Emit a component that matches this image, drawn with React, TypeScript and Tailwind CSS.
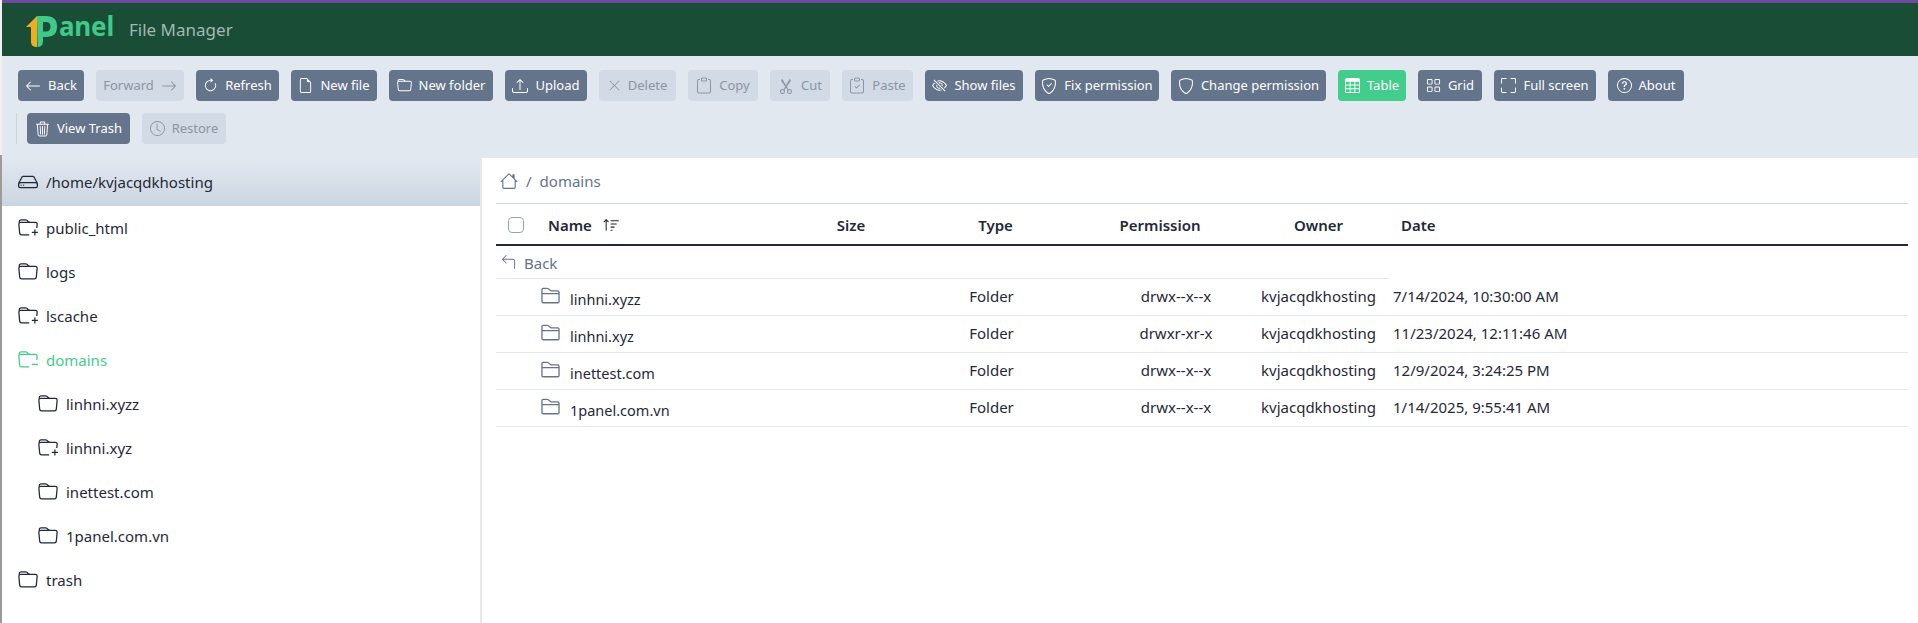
import type { ReactNode } from "react";
import {
  BsArrow90DegLeft, BsArrowClockwise, BsArrowLeft, BsArrowRight, BsClipboard, BsClipboardCheck,
  BsClock, BsEyeSlash, BsFileEarmark, BsFolder, BsFolder2, BsFolderMinus, BsFolderPlus, BsFullscreen,
  BsGrid, BsHdd, BsHouse, BsQuestionCircle, BsScissors, BsShield, BsShieldCheck, BsSortUp, BsTable,
  BsTrash3, BsUpload, BsXLg,
} from "react-icons/bs";

type Tool = { label: string; icon: ReactNode; width: string; tone?: "off" | "on"; iconRight?: boolean };

const ROW_ONE: Tool[] = [
  { label: "Back", icon: <BsArrowLeft className="w-4 h-4" />, width: "w-[66px]" },
  { label: "Forward", icon: <BsArrowRight className="w-4 h-4" />, width: "w-[88px]", tone: "off", iconRight: true },
  { label: "Refresh", icon: <BsArrowClockwise className="w-[15px] h-[15px]" />, width: "w-[83px]" },
  { label: "New file", icon: <BsFileEarmark className="w-[15px] h-[17px]" />, width: "w-[86px]" },
  { label: "New folder", icon: <BsFolder className="w-[15px] h-[15px]" />, width: "w-[104px]" },
  { label: "Upload", icon: <BsUpload className="w-[16px] h-[16px]" />, width: "w-[82px]" },
  { label: "Delete", icon: <BsXLg className="w-[13px] h-[13px]" />, width: "w-[77px]", tone: "off" },
  { label: "Copy", icon: <BsClipboard className="w-[16px] h-[17px]" />, width: "w-[70px]", tone: "off" },
  { label: "Cut", icon: <BsScissors className="w-[16px] h-[16px]" />, width: "w-[60px]", tone: "off" },
  { label: "Paste", icon: <BsClipboardCheck className="w-[16px] h-[17px]" />, width: "w-[71px]", tone: "off" },
  { label: "Show files", icon: <BsEyeSlash className="w-[15px] h-[15px]" />, width: "w-[98px]" },
  { label: "Fix permission", icon: <BsShieldCheck className="w-[16px] h-[16px]" />, width: "w-[124px]" },
  { label: "Change permission", icon: <BsShield className="w-[16px] h-[16px]" />, width: "w-[155px]" },
  { label: "Table", icon: <BsTable className="w-[15px] h-[15px]" />, width: "w-[68px]", tone: "on" },
  { label: "Grid", icon: <BsGrid className="w-[15px] h-[15px]" />, width: "w-[64px]" },
  { label: "Full screen", icon: <BsFullscreen className="w-[15px] h-[15px]" />, width: "w-[102px]" },
  { label: "About", icon: <BsQuestionCircle className="w-[15px] h-[15px]" />, width: "w-[76px]" },
];

const TREE = [
  { name: "public_html", Icon: BsFolderPlus },
  { name: "logs", Icon: BsFolder },
  { name: "lscache", Icon: BsFolderPlus },
  { name: "domains", Icon: BsFolderMinus, active: true },
  { name: "linhni.xyzz", Icon: BsFolder, nested: true },
  { name: "linhni.xyz", Icon: BsFolderPlus, nested: true },
  { name: "inettest.com", Icon: BsFolder, nested: true },
  { name: "1panel.com.vn", Icon: BsFolder, nested: true },
  { name: "trash", Icon: BsFolder },
];

const FILES = [
  { name: "linhni.xyzz", perm: "drwx--x--x", date: "7/14/2024, 10:30:00 AM" },
  { name: "linhni.xyz", perm: "drwxr-xr-x", date: "11/23/2024, 12:11:46 AM" },
  { name: "inettest.com", perm: "drwx--x--x", date: "12/9/2024, 3:24:25 PM" },
  { name: "1panel.com.vn", perm: "drwx--x--x", date: "1/14/2025, 9:55:41 AM" },
];

function ToolButton({ label, icon, width, tone, iconRight }: Tool) {
  const color =
    tone === "off"
      ? "bg-[#d2dae5] text-[#8c95a3]"
      : tone === "on"
        ? "bg-[#42cd8c] text-white"
        : "bg-[#64748b] text-white";
  return (
    <button className={`${width} ${color} h-[31px] flex-shrink-0 rounded-[4px] flex items-center justify-center gap-[7px] text-[13px] whitespace-nowrap`}>
      {!iconRight && icon}
      <span className="mt-[1px]">{label}</span>
      {iconRight && icon}
    </button>
  );
}

function Logo() {
  return (
    <div className="flex items-center w-[103px] h-[53px]">
      <svg viewBox="0 0 32 33" className="w-[32px] h-[33px] flex-shrink-0 mt-[5px]">
        <path d="M0 11 L11 0 L11 31 Q5 31 5 26 L5 11 Z" fill="#f5ab1e" />
        <path d="M11 0 L20 0 Q31 0 31 10.5 Q31 21 20 21 L17 21 L17 25 Q17 31 11.5 31 Z M17 6 L17 15.5 L20 15.5 Q24.5 15.5 24.5 10.5 Q24.5 6 20 6 Z" fill="#3fc98a" fillRule="evenodd" />
      </svg>
      <span className="text-[26px] leading-none font-bold text-[#3fc98a] ml-[1px] mt-[-8px] tracking-[-0.2px]">anel</span>
    </div>
  );
}

export default function App() {
  return (
    <div className="flex h-[623px] w-full overflow-hidden bg-white text-[#1f2937] font-['Noto_Sans',sans-serif]">
      <div className="w-[2px] flex-shrink-0 flex flex-col">
        <div className="h-[155px] bg-[#f1f1f1]" />
        <div className="flex-1 bg-[#9b9b9b]" />
      </div>

      <div className="flex-1 min-w-0 flex flex-col">
        {/* header */}
        <div className="h-[56px] flex-shrink-0 bg-[#1a4d35] border-t-[3px] border-[#6d4a9c] flex items-center pl-[24px]">
          <Logo />
          <span className="mt-[1px] text-[17px] text-[#a3b8b4]">File Manager</span>
        </div>

        {/* toolbar */}
        <div className="flex-shrink-0 bg-[#e2e8f0] pl-[16px] pt-[14px] pb-[14px] flex flex-col gap-3">
          <div className="flex gap-3">
            {ROW_ONE.map((t) => (
              <ToolButton key={t.label} {...t} />
            ))}
          </div>
          <div className="flex gap-3">
            <div className="w-px bg-[#cbd5e1] -ml-[2px] mr-[-2px]" />
            <ToolButton label="View Trash" icon={<BsTrash3 className="w-[15px] h-[16px]" />} width="w-[103px]" />
            <ToolButton label="Restore" icon={<BsClock className="w-[15px] h-[15px]" />} width="w-[84px]" tone="off" />
          </div>
        </div>

        <div className="flex-1 min-h-0 flex bg-white">
          {/* tree */}
          <div className="w-[480px] flex-shrink-0 border-r-2 border-[#e5e7eb] text-[15px]">
            <div className="h-[48px] flex items-center gap-2 pl-[16px] bg-gradient-to-b from-[#e2e8f0] to-[#cbd5e1]">
              <BsHdd className="w-[20px] h-[20px]" />
              <span>/home/kvjacqdkhosting</span>
            </div>
            {TREE.map(({ name, Icon, active, nested }) => (
              <div
                key={name}
                className={`h-[44px] flex items-center gap-2 ${nested ? "pl-[36px]" : "pl-[16px]"} ${active ? "text-[#42cd8c]" : ""}`}
              >
                <Icon className="w-[20px] h-[20px]" />
                <span>{name}</span>
              </div>
            ))}
          </div>

          {/* file list */}
          <div className="flex-1 min-w-0 pl-[14px] pr-[10px]">
            <div className="h-[46px] flex items-center pl-[4px] gap-[8px] border-b border-[#cbd5e1] text-[15px] text-[#64748b]">
              <BsHouse className="w-[18px] h-[18px]" />
              <span className="mt-[1px]">/</span>
              <span className="mt-[1px]">domains</span>
            </div>
            <table className="w-full table-fixed border-collapse text-[15px]">
              <colgroup>
                <col className="w-[44px]" />
                <col className="w-[250px]" />
                <col className="w-[122px]" />
                <col className="w-[167px]" />
                <col className="w-[169px]" />
                <col className="w-[141px]" />
                <col />
              </colgroup>
              <thead>
                <tr className="h-[41px] border-b-2 border-[#1f2937] font-semibold">
                  <th className="pl-[12px] pt-[2px] text-left">
                    <span className="block w-4 h-4 rounded-[4px] border border-[#94a3b8]" />
                  </th>
                  <th className="pl-[8px] pt-[2px] text-left font-semibold">
                    <span className="flex items-center gap-[11px]">
                      Name <BsSortUp className="w-[17px] h-[17px]" />
                    </span>
                  </th>
                  <th className="pt-[2px] font-semibold">Size</th>
                  <th className="pt-[2px] font-semibold">Type</th>
                  <th className="pt-[2px] pr-[7px] font-semibold">Permission</th>
                  <th className="pt-[2px] font-semibold">Owner</th>
                  <th className="pl-[12px] pt-[2px] text-left font-semibold">Date</th>
                </tr>
              </thead>
              <tbody>
                <tr className="h-[33px]">
                  <td colSpan={6} className="border-b border-[#e2e8f0] pl-[5px] pt-[2px] text-[#64748b]">
                    <span className="flex items-center gap-2">
                      <BsArrow90DegLeft className="w-[15px] h-[15px]" />
                      Back
                    </span>
                  </td>
                  <td />
                </tr>
                {FILES.map((f) => (
                  <tr key={f.name} className="h-[37px] border-b border-[#e2e8f0]">
                    <td />
                    <td className="pl-[0px]">
                      <span className="flex items-start gap-[9px] pt-[3px]">
                        <BsFolder2 className="w-[21px] h-[21px] text-[#64748b]" />
                        <span className="mt-[4px] text-[14.5px]">{f.name}</span>
                      </span>
                    </td>
                    <td />
                    <td className="text-center pr-2">Folder</td>
                    <td className="text-center pl-[25px]">{f.perm}</td>
                    <td className="text-center">kvjacqdkhosting</td>
                    <td className="pl-[4px]">{f.date}</td>
                  </tr>
                ))}
              </tbody>
            </table>
          </div>
        </div>
      </div>
    </div>
  );
}
